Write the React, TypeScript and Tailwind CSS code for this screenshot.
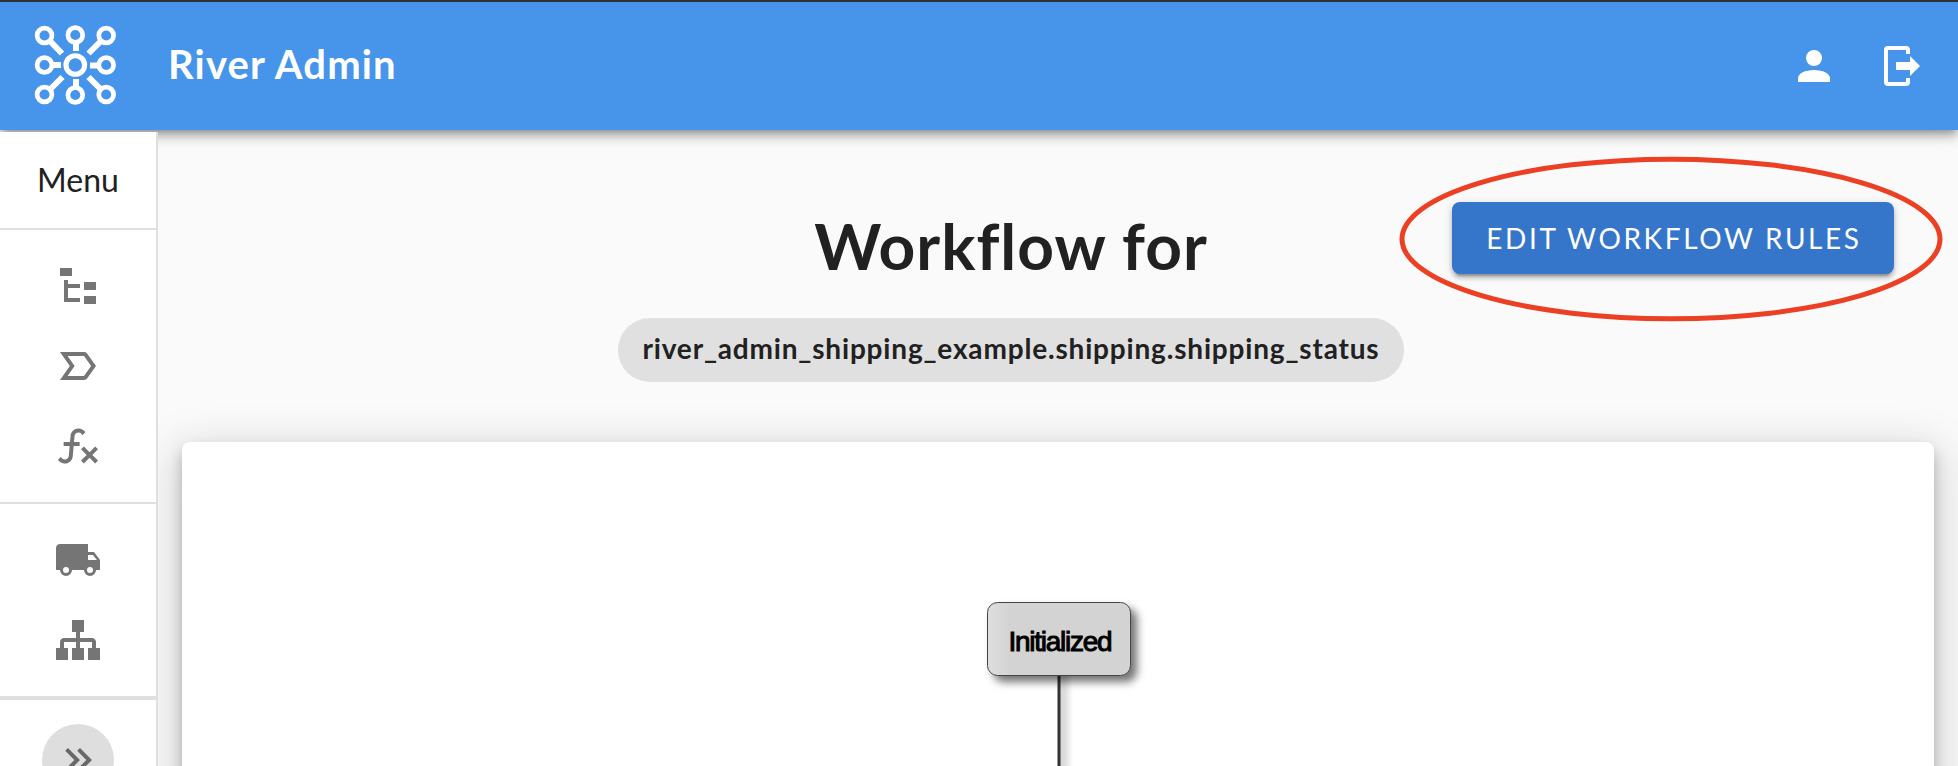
import React from "react";

const icons = {
  tree: "M3,3H9V7H3V3M15,10H21V14H15V10M15,17H21V21H15V17M13,13H7V18H13V20H7L5,20V9H7V11H13V13Z",
  label:
    "M3,5H15C15.67,5 16.27,5.33 16.63,5.84L21,12L16.63,18.16C16.27,18.67 15.67,19 15,19H3L7.9,12L3,5M6.8,7L10.3,12L6.8,17H15L18.55,12L15,7H6.8Z",
  fx: "M12.42,5.29C11.32,5.19 10.35,6 10.25,7.11L10,10H12.82V12H9.82L9.38,17.07C9.18,19.27 7.24,20.9 5.04,20.7C3.79,20.59 2.66,19.9 2,18.83L3.5,17.33C3.83,18.38 4.96,18.97 6,18.63C6.78,18.39 7.33,17.7 7.4,16.89L7.82,12H4.82V10H8L8.27,6.93C8.46,4.73 10.39,3.1 12.6,3.28C13.86,3.39 15,4.09 15.66,5.17L14.16,6.67C13.91,5.9 13.23,5.36 12.42,5.29M22,13.65L20.59,12.24L17.76,15.07L14.93,12.24L13.5,13.65L16.35,16.5L13.5,19.31L14.93,20.72L17.76,17.89L20.59,20.72L22,19.31L19.17,16.5L22,13.65Z",
  truck:
    "M18,18.5A1.5,1.5 0 0,1 16.5,17A1.5,1.5 0 0,1 18,15.5A1.5,1.5 0 0,1 19.5,17A1.5,1.5 0 0,1 18,18.5M19.5,9.5L21.46,12H17V9.5M6,18.5A1.5,1.5 0 0,1 4.5,17A1.5,1.5 0 0,1 6,15.5A1.5,1.5 0 0,1 7.5,17A1.5,1.5 0 0,1 6,18.5M20,8H17V4H3C1.89,4 1,4.89 1,6V17H3A3,3 0 0,0 6,20A3,3 0 0,0 9,17H15A3,3 0 0,0 18,20A3,3 0 0,0 21,17H23V12L20,8Z",
  sitemap:
    "M9,2V8H11V11H5C3.89,11 3,11.89 3,13V16H1V22H7V16H5V13H11V16H9V22H15V16H13V13H19V16H17V22H23V16H21V13C21,11.89 20.11,11 19,11H13V8H15V2H9Z",
  expand:
    "M5.59,7.41L7,6L13,12L7,18L5.59,16.59L10.17,12L5.59,7.41M11.59,7.41L13,6L19,12L13,18L11.59,16.59L16.17,12L11.59,7.41Z",
  account:
    "M12,4A4,4 0 0,1 16,8A4,4 0 0,1 12,12A4,4 0 0,1 8,8A4,4 0 0,1 12,4M12,14C16.42,14 20,15.79 20,18V20H4V18C4,15.79 7.58,14 12,14Z",
  logout:
    "M16,17V14H9V10H16V7L21,12L16,17M14,2A2,2 0 0,1 16,4V6H14V4H5V20H14V18H16V20A2,2 0 0,1 14,22H5A2,2 0 0,1 3,20V4A2,2 0 0,1 5,2H14Z",
};

function Icon({ name }: { name: keyof typeof icons }) {
  return (
    <svg viewBox="0 0 24 24" className="block size-12 shrink-0" fill="currentColor" fillRule="evenodd">
      <path d={icons[name]} />
    </svg>
  );
}

const nodes = [
  [10.5, 11.5], [41.3, 11], [72.2, 11.5],
  [10.5, 41], [72.2, 41],
  [10.5, 70.5], [41.3, 71], [72.2, 70.5],
];

function Logo() {
  return (
    <svg viewBox="0 0 84 84" className="block size-[84px] shrink-0" fill="none" stroke="white">
      {nodes.map(([x, y]) => (
        <circle key={`${x}-${y}`} cx={x} cy={y} r="7.4" strokeWidth="4.7" />
      ))}
      <circle cx="41.3" cy="41" r="9.3" strokeWidth="5.1" />
      <path
        d="M16 17L28 29.5M67 17L54.5 29.5M16 65.5L28.5 53M67 65.5L54.5 53M42 18V27M42 64V55M18 41H27M65 41.5H56"
        strokeWidth="6"
      />
    </svg>
  );
}

function Header() {
  return (
    <header className="relative z-20 flex h-[130px] shrink-0 items-center border-t-2 border-[#2f3136] bg-[#4695eb] pl-[34px] pr-8 text-white shadow-[0_4px_8px_-2px_rgba(0,0,0,0.3),0_8px_10px_rgba(0,0,0,0.14),0_2px_20px_rgba(0,0,0,0.12)]">
      <Logo />
      <h1 className="-mt-1 ml-[50px] whitespace-nowrap text-[40px] font-bold leading-none tracking-[1.15px]">River Admin</h1>
      <div className="ml-auto flex gap-10">
        <Icon name="account" />
        <Icon name="logout" />
      </div>
    </header>
  );
}

function Sidebar() {
  return (
    <aside className="relative z-30 mt-0.5 flex w-[158px] shrink-0 flex-col border-r-2 border-[#dfdfdf] bg-white text-[#757575]">
      <div className="flex h-[98px] shrink-0 items-center justify-center border-b-2 border-[#dfdfdf] text-[32px] text-[#212121]">
        <span>Menu</span>
      </div>
      <nav className="flex h-[274px] shrink-0 flex-col items-center gap-8 border-b-2 border-[#dfdfdf] pt-8">
        <Icon name="tree" />
        <Icon name="label" />
        <Icon name="fx" />
      </nav>
      <nav className="flex h-[196px] shrink-0 flex-col items-center gap-8 border-b-4 border-[#dfdfdf] pt-8">
        <Icon name="truck" />
        <Icon name="sitemap" />
      </nav>
      <div className="flex shrink-0 justify-center pt-6">
        <button className="flex size-[72px] items-center justify-center rounded-full bg-[#dedede] text-[#686868]">
          <Icon name="expand" />
        </button>
      </div>
    </aside>
  );
}

function Workflow() {
  return (
    <section className="ml-6 mr-6 h-[400px] rounded-lg bg-white shadow-[0_8px_14px_rgba(0,0,0,0.22),0_12px_44px_8px_rgba(0,0,0,0.15)]">
      <svg viewBox="0 0 1752 400" className="block h-[400px] w-[1752px]">
        <defs>
          <filter id="drop" x="-20%" y="-20%" width="150%" height="160%">
            <feDropShadow dx="6" dy="6" stdDeviation="4" floodColor="#000" floodOpacity="0.55" />
          </filter>
          <linearGradient id="edge" x1="0" y1="0" x2="1" y2="0">
            <stop offset="0" stopColor="#d6d6d6" />
            <stop offset="0.4" stopColor="#dedede" />
            <stop offset="1" stopColor="#ffffff" />
          </linearGradient>
          <linearGradient id="face" x1="0" y1="0" x2="1" y2="0">
            <stop offset="0" stopColor="#dfdfdf" />
            <stop offset="0.15" stopColor="#d3d3d3" />
          </linearGradient>
        </defs>
        <rect x="878" y="234" width="13" height="166" fill="url(#edge)" />
        <path d="M877 234V400" stroke="#333" strokeWidth="3" />
        <rect x="805.5" y="160.5" width="143" height="73" rx="10" fill="url(#face)" stroke="#444" filter="url(#drop)" />
        <text
          x="878.5"
          y="208.5"
          textAnchor="middle"
          textLength="104"
          className="fill-black stroke-black font-['Liberation_Sans'] text-[28px]"
        >
          Initialized
        </text>
      </svg>
    </section>
  );
}

export default function App() {
  return (
    <div className="flex h-[766px] w-[1958px] flex-col overflow-hidden bg-[#fafafa] font-['Lato',sans-serif] text-[#212121]">
      <Header />
      <div className="flex min-h-0 flex-1">
        <Sidebar />
        <main className="flex min-w-0 flex-1 flex-col">
          <div className="relative flex h-[312px] shrink-0 flex-col items-center pr-[94px]">
            <h2 className="mt-[80px] whitespace-nowrap text-[64px] font-bold leading-[72px] tracking-[1px]">Workflow for</h2>
            <div className="mt-9 flex h-16 w-[786px] items-center justify-center rounded-full bg-[#e0e0e0]">
              <span className="-mt-1 whitespace-nowrap text-[28px] font-bold tracking-[0.82px]">
                river_admin_shipping_example.shipping.shipping_status
              </span>
            </div>
            <button className="absolute right-16 top-[72px] flex h-[72px] w-[442px] items-center justify-center whitespace-nowrap rounded-lg bg-[#3576cb] pl-0.5 text-[28px] tracking-[2.6px] text-white shadow-[0_6px_2px_-4px_rgba(0,0,0,0.2),0_4px_4px_rgba(0,0,0,0.2),0_2px_10px_rgba(0,0,0,0.14)]">
              <span>EDIT WORKFLOW RULES</span>
            </button>
            <svg viewBox="0 0 544 166" className="absolute right-[15px] top-[25.5px] h-[166px] w-[544px]">
              <ellipse cx="272" cy="83" rx="269" ry="79.8" fill="none" stroke="#ec4025" strokeWidth="5" />
            </svg>
          </div>
          <Workflow />
        </main>
      </div>
    </div>
  );
}
